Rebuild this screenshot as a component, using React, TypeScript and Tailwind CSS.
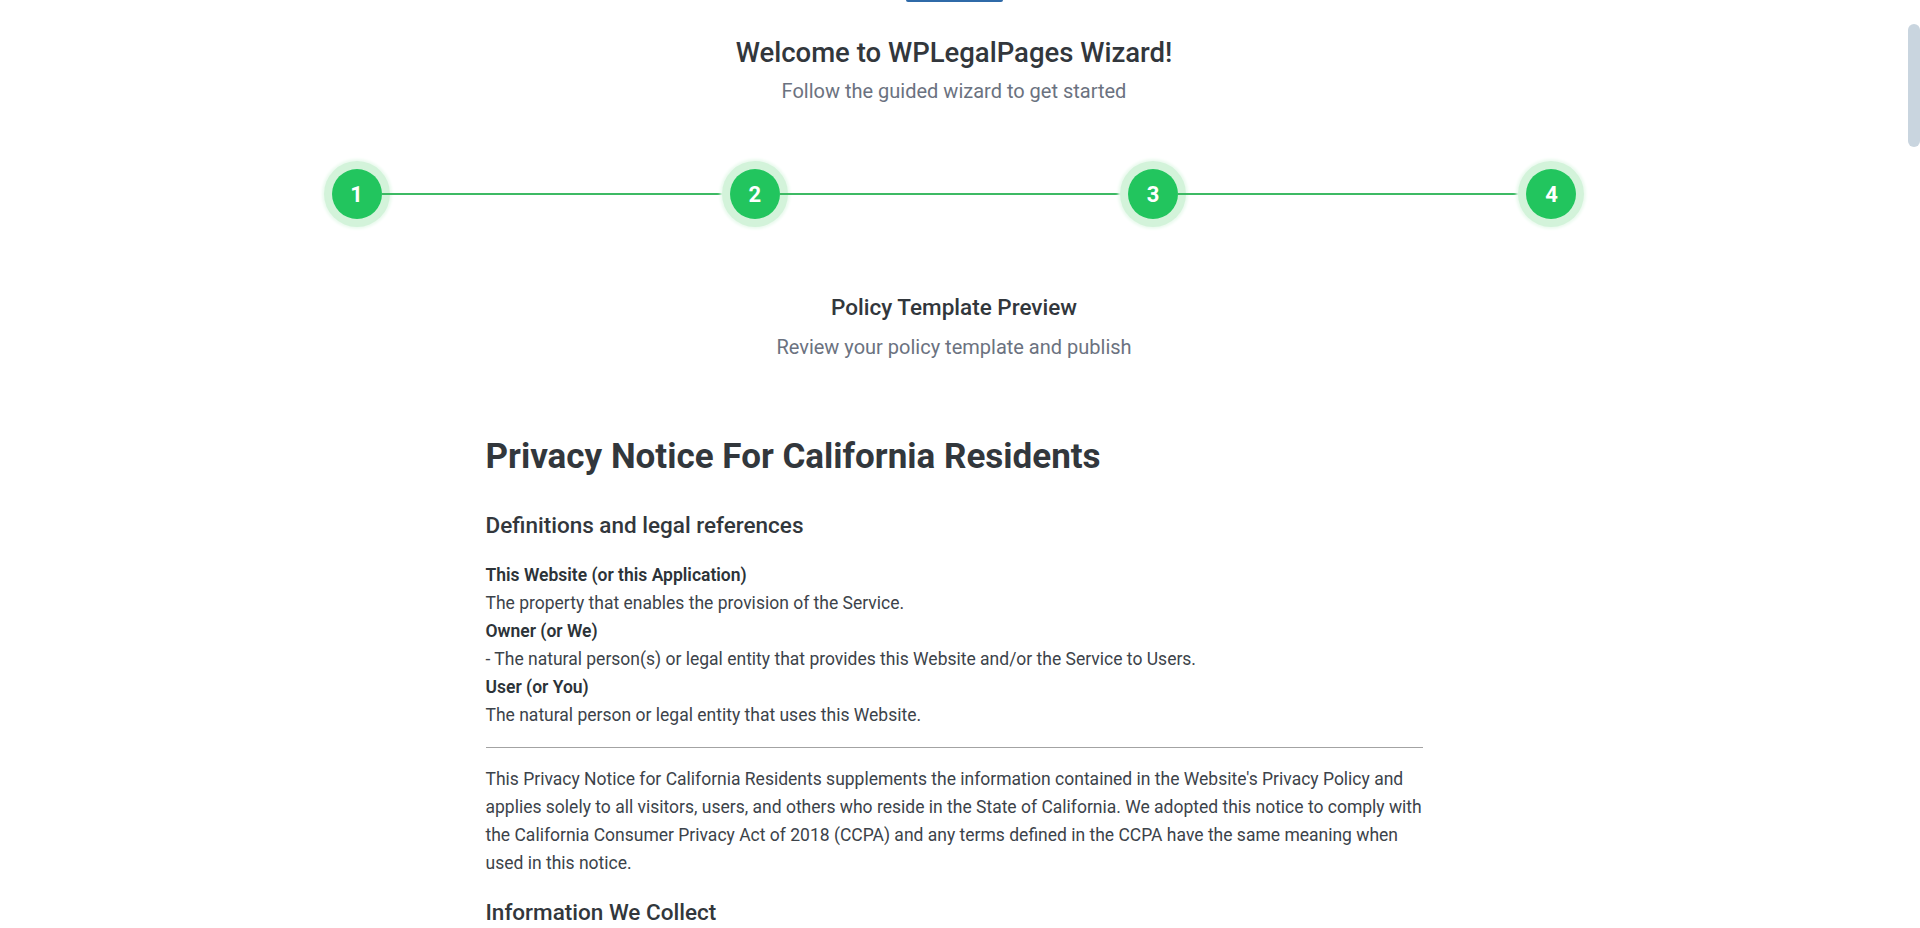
import React from "react";

const font = { fontFamily: "Roboto, 'Noto Sans', sans-serif" };

function Step({ n }: { n: number }) {
  return (
    <div className="flex h-[50px] w-[50px] shrink-0 items-center justify-center rounded-full bg-[#22c55e] text-[22px] font-bold text-white shadow-[0_0_0_8px_#d3f3da,0_0_3px_10px_#eafaee]">
      {n}
    </div>
  );
}

function Line() {
  return <div className="h-[2px] flex-1 bg-[#3dba64]" />;
}

export default function App() {
  return (
    <div className="flex h-screen w-full overflow-hidden bg-white" style={font}>
      <main className="flex flex-1 flex-col items-center">
        <div className="h-[2px] w-[97px] rounded-b-[4px] bg-[#2f6aa8]" />
        <h1 className="mt-[33px] text-[27.5px] font-medium leading-[36px] text-[#32373c]">
          Welcome to WPLegalPages Wizard!
        </h1>
        <p className="mt-[6px] text-[20px] leading-[28px] text-[#6b7280]">
          Follow the guided wizard to get started
        </p>

        <div className="mt-[64px] flex w-[1245px] items-center">
          <Step n={1} />
          <Line />
          <Step n={2} />
          <Line />
          <Step n={3} />
          <Line />
          <Step n={4} />
        </div>

        <h2 className="mt-[73px] text-[22.5px] font-medium leading-[30px] text-[#32373c]">
          Policy Template Preview
        </h2>
        <p className="mt-[11px] text-[20px] leading-[28px] text-[#6b7280]">
          Review your policy template and publish
        </p>

        <div className="mt-[76px] w-[937px] text-[17.5px] leading-[28px] text-[#3c434a]">
          <h1 className="text-[35px] font-bold leading-[40px] text-[#32373c]">
            Privacy Notice For California Residents
          </h1>
          <h2 className="mt-[34px] text-[22.5px] font-medium leading-[28px] text-[#32373c]">
            Definitions and legal references
          </h2>
          <div className="mt-[22px]">
            <p className="font-semibold text-[#2c3338]">This Website (or this Application)</p>
            <p>The property that enables the provision of the Service.</p>
            <p className="font-semibold text-[#2c3338]">Owner (or We)</p>
            <p>- The natural person(s) or legal entity that provides this Website and/or the Service to Users.</p>
            <p className="font-semibold text-[#2c3338]">User (or You)</p>
            <p>The natural person or legal entity that uses this Website.</p>
          </div>
          <div className="mt-[18px] h-px w-full bg-[#a3a3a3]" />
          <p className="mt-[17px]">
            This Privacy Notice for California Residents supplements the information contained in the Website's Privacy Policy and applies solely to all visitors, users, and others who reside in the State of California. We adopted this notice to comply with the California Consumer Privacy Act of 2018 (CCPA) and any terms defined in the CCPA have the same meaning when used in this notice.
          </p>
          <h2 className="mt-[21px] text-[22.5px] font-medium leading-[28px] text-[#32373c]">
            Information We Collect
          </h2>
        </div>
      </main>
      <aside className="w-[12px] shrink-0 pt-[24px]">
        <div className="h-[123px] w-[12px] rounded-full bg-[#c9d5df]" />
      </aside>
    </div>
  );
}
